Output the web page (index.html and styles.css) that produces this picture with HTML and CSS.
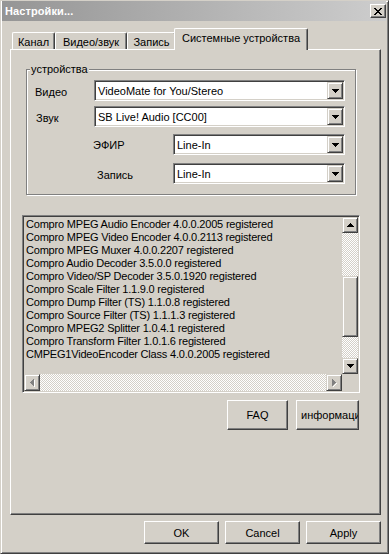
FILE: index.html
```html
<!DOCTYPE html>
<html lang="ru">
<head>
<meta charset="utf-8">
<title>Настройки...</title>
<link rel="stylesheet" href="styles.css">
</head>
<body>
<div class="window">
  <div class="titlebar">
    <span class="title">Настройки...</span>
    <span class="close"><svg class="px" width="8" height="7" viewBox="0 0 8 7"><path d="M0 0h2v1H0zM6 0h2v1H6zM1 1h2v1H1zM5 1h2v1H5zM2 2h4v1H2zM3 3h2v1H3zM2 4h4v1H2zM1 5h2v1H1zM5 5h2v1H5zM0 6h2v1H0zM6 6h2v1H6z" fill="#000"/></svg></span>
  </div>
  <div class="tabs">
    <div class="tab t1">Канал</div>
    <div class="tab t2">Видео/звук</div>
    <div class="tab t3">Запись</div>
    <div class="tab active">Системные устройства</div>
  </div>
  <div class="panel">
    <div class="group">
      <span class="legend">устройства</span>
      <div class="row r1"><span class="lbl l1">Видео</span><div class="combo wide"><span class="val">VideoMate for You/Stereo</span><span class="drop"><svg class="px" width="7" height="4" viewBox="0 0 7 4"><path d="M0 0h7v1H0zM1 1h5v1H1zM2 2h3v1H2zM3 3h1v1H3z" fill="#000"/></svg></span></div></div>
      <div class="row r2"><span class="lbl l2">Звук</span><div class="combo wide"><span class="val">SB Live! Audio [CC00]</span><span class="drop"><svg class="px" width="7" height="4" viewBox="0 0 7 4"><path d="M0 0h7v1H0zM1 1h5v1H1zM2 2h3v1H2zM3 3h1v1H3z" fill="#000"/></svg></span></div></div>
      <div class="row r3"><span class="lbl l3">ЭФИР</span><div class="combo narrow"><span class="val">Line-In</span><span class="drop"><svg class="px" width="7" height="4" viewBox="0 0 7 4"><path d="M0 0h7v1H0zM1 1h5v1H1zM2 2h3v1H2zM3 3h1v1H3z" fill="#000"/></svg></span></div></div>
      <div class="row r4"><span class="lbl l4">Запись</span><div class="combo narrow"><span class="val">Line-In</span><span class="drop"><svg class="px" width="7" height="4" viewBox="0 0 7 4"><path d="M0 0h7v1H0zM1 1h5v1H1zM2 2h3v1H2zM3 3h1v1H3z" fill="#000"/></svg></span></div></div>
    </div>
    <div class="listbox">
      <div class="items">
        <div>Compro MPEG Audio Encoder 4.0.0.2005 registered</div>
        <div>Compro MPEG Video Encoder 4.0.0.2113 registered</div>
        <div>Compro MPEG Muxer 4.0.0.2207 registered</div>
        <div>Compro Audio Decoder 3.5.0.0 registered</div>
        <div>Compro Video/SP Decoder 3.5.0.1920 registered</div>
        <div>Compro Scale Filter 1.1.9.0 registered</div>
        <div>Compro Dump Filter (TS) 1.1.0.8 registered</div>
        <div>Compro Source Filter (TS) 1.1.1.3 registered</div>
        <div>Compro MPEG2 Splitter 1.0.4.1 registered</div>
        <div>Compro Transform Filter 1.0.1.6 registered</div>
        <div>CMPEG1VideoEncoder Class 4.0.0.2005 registered</div>
      </div>
      <div class="vscroll">
        <span class="sbtn"><svg class="px" width="7" height="4" viewBox="0 0 7 4"><path d="M3 0h1v1H3zM2 1h3v1H2zM1 2h5v1H1zM0 3h7v1H0z" fill="#000"/></svg></span>
        <span class="track top"></span>
        <span class="thumb"></span>
        <span class="track bottom"></span>
        <span class="sbtn"><svg class="px" width="7" height="4" viewBox="0 0 7 4"><path d="M0 0h7v1H0zM1 1h5v1H1zM2 2h3v1H2zM3 3h1v1H3z" fill="#000"/></svg></span>
      </div>
      <div class="hscroll">
        <span class="sbtn h"><svg class="px" width="5" height="8" viewBox="0 0 5 8"><path d="M4 1h1v7H4zM3 5h1v2H3zM2 4h1v2H2z" fill="#fff"/><path d="M3 0h1v7H3zM2 1h1v5H2zM1 2h1v3H1zM0 3h1v1H0z" fill="#808080"/></svg></span>
        <span class="track grow"></span>
        <span class="sbtn h"><svg class="px" width="5" height="8" viewBox="0 0 5 8"><path d="M1 7h1v1H1zM2 6h1v1H2zM3 5h1v1H3zM4 4h1v1H4z" fill="#fff"/><path d="M0 0h1v7H0zM1 1h1v5H1zM2 2h1v3H2zM3 3h1v1H3z" fill="#808080"/></svg></span>
      </div>
      <div class="corner"></div>
    </div>
    <div class="btnrow">
      <button class="btn faq">FAQ</button>
      <button class="btn info"><span>информация</span></button>
    </div>
  </div>
  <div class="dlg">
    <button class="btn dbtn">OK</button>
    <button class="btn dbtn">Cancel</button>
    <button class="btn dbtn">Apply</button>
  </div>
</div>
</body>
</html>
```
FILE: styles.css
```css
* { box-sizing: border-box; }
html, body { margin: 0; padding: 0; }
body {
  background: #d4d0c8;
  font-family: "Liberation Sans", Arial, sans-serif;
  font-size: 11px;
  color: #000;
}
.px { display: block; shape-rendering: crispEdges; }

.window {
  width: 389px;
  height: 554px;
  background: #d4d0c8;
  border-left: 1px solid #d4d0c8;
  border-top: 1px solid #d4d0c8;
  border-right: 1px solid #404040;
  border-bottom: 1px solid #404040;
  box-shadow: inset 1px 1px #fff, inset -1px -1px #808080;
  padding: 0 2px 0 1px;
  display: flex;
  flex-direction: column;
}

.titlebar {
  height: 20px;
  display: flex;
  align-items: center;
  background: linear-gradient(to right, #959595, #cdcdcd);
  padding-left: 3px;
}
.title {
  color: #fff;
  font-weight: bold;
  font-size: 11px;
  letter-spacing: 0.1px;
}
.close {
  margin-left: auto;
  width: 16px;
  height: 14px;
  display: flex;
  align-items: center;
  justify-content: center;
  background: #d4d0c8;
  border: 1px solid;
  border-color: #fff #404040 #404040 #fff;
  box-shadow: inset -1px -1px #808080;
}

/* tabs */
.tabs {
  display: flex;
  align-items: flex-end;
  height: 21px;
  margin: 7px 0 0 8px;
  padding-left: 2px;
  position: relative;
  z-index: 1;
}
.tab {
  height: 17px;
  display: flex;
  align-items: center;
  justify-content: center;
  background: #d4d0c8;
  border: 1px solid;
  border-bottom: none;
  border-color: #fff #404040 #fff #fff;
  box-shadow: inset -1px 0 #808080;
  border-radius: 2px 2px 0 0;
  white-space: nowrap;
  padding-top: 1px;
}
.t1 { width: 43px; }
.t2 { width: 72px; }
.t3 { width: 49px; }
.tab.active {
  width: 134px;
  height: 22px;
  margin: 0 -2px -1px;
  position: relative;
  z-index: 2;
  padding-top: 0;
  padding-bottom: 3px;
}

/* panel */
.panel {
  margin-left: 8px;
  width: 371px;
  height: 466px;
  border: 1px solid;
  border-color: #fff #404040 #404040 #fff;
  box-shadow: inset -1px -1px #808080;
  display: flex;
  flex-direction: column;
}

.group {
  position: relative;
  margin: 19px 0 0 15px;
  width: 330px;
  height: 126px;
  border: 1px solid #808080;
  box-shadow: inset 1px 1px #fff, 1px 1px #fff;
  padding-top: 10px;
}
.legend {
  position: absolute;
  top: -8px;
  left: 3px;
  padding: 0 1px;
  background: #d4d0c8;
  line-height: 14px;
}
.row {
  display: flex;
  align-items: center;
  height: 21px;
}
.r2 { margin-top: 5px; }
.r3 { margin-top: 7px; }
.r4 { margin-top: 8px; }
.lbl { display: block; padding-top: 3px; }
.l1 { margin-left: 8px; width: 59px; }
.l2 { margin-left: 9px; width: 58px; }
.l3 { margin-left: 66px; width: 80px; padding-top: 0; }
.l4 { margin-left: 70px; width: 76px; padding-top: 2px; }

.combo {
  height: 21px;
  display: flex;
  align-items: center;
  background: #fff;
  border: 1px solid;
  border-color: #808080 #fff #fff #808080;
  box-shadow: inset 1px 1px #404040, inset -1px -1px #d4d0c8;
  padding: 1px;
}
.combo.wide { width: 251px; }
.combo.narrow { width: 172px; }
.val {
  flex: 1;
  padding-left: 2px;
  white-space: nowrap;
  overflow: hidden;
}
.drop, .sbtn {
  width: 16px;
  height: 17px;
  display: flex;
  align-items: center;
  justify-content: center;
  background: #d4d0c8;
  border: 1px solid;
  border-color: #d4d0c8 #404040 #404040 #d4d0c8;
  box-shadow: inset 1px 1px #fff, inset -1px -1px #808080;
  flex: none;
}

/* listbox */
.listbox {
  margin: 20px 0 0 11px;
  width: 338px;
  height: 178px;
  border: 1px solid;
  border-color: #808080 #fff #fff #808080;
  box-shadow: inset 1px 1px #404040, inset -1px -1px #d4d0c8;
  padding: 1px;
  display: grid;
  grid-template-columns: 1fr 16px;
  grid-template-rows: 1fr 17px;
}
.items {
  padding: 1px 0 0 2px;
  overflow: hidden;
  white-space: nowrap;
  line-height: 13px;
  letter-spacing: -0.2px;
}
.vscroll {
  display: flex;
  flex-direction: column;
}
.vscroll .sbtn { height: 16px; }
.track {
  background: repeating-conic-gradient(#fff 0 25%, #d4d0c8 0 50%) 0 0 / 2px 2px;
}
.track.top { height: 43px; }
.track.bottom { flex: 1; }
.track.grow { flex: 1; }
.thumb {
  height: 61px;
  background: #d4d0c8;
  border: 1px solid;
  border-color: #d4d0c8 #404040 #404040 #d4d0c8;
  box-shadow: inset 1px 1px #fff, inset -1px -1px #808080;
}
.hscroll { display: flex; }
.hscroll .sbtn { height: 17px; }
.corner { background: #d4d0c8; }

/* buttons */
.btn {
  font-family: "Liberation Sans", Arial, sans-serif;
  font-size: 11px;
  color: #000;
  background: #d4d0c8;
  border: 1px solid;
  border-color: #fff #404040 #404040 #fff;
  box-shadow: inset -1px -1px #808080;
  padding: 0;
  margin: 0;
}
.btnrow {
  display: flex;
  justify-content: flex-end;
  gap: 8px;
  margin-top: 7px;
  padding-right: 21px;
}
.faq { width: 61px; height: 30px; }
.info {
  width: 63px;
  height: 30px;
  overflow: hidden;
  text-align: left;
  padding-left: 4px;
  white-space: nowrap;
}
.dlg {
  display: flex;
  justify-content: flex-end;
  gap: 6px;
  margin-top: 6px;
  padding-right: 5px;
}
.dbtn { width: 75px; height: 23px; }
```
